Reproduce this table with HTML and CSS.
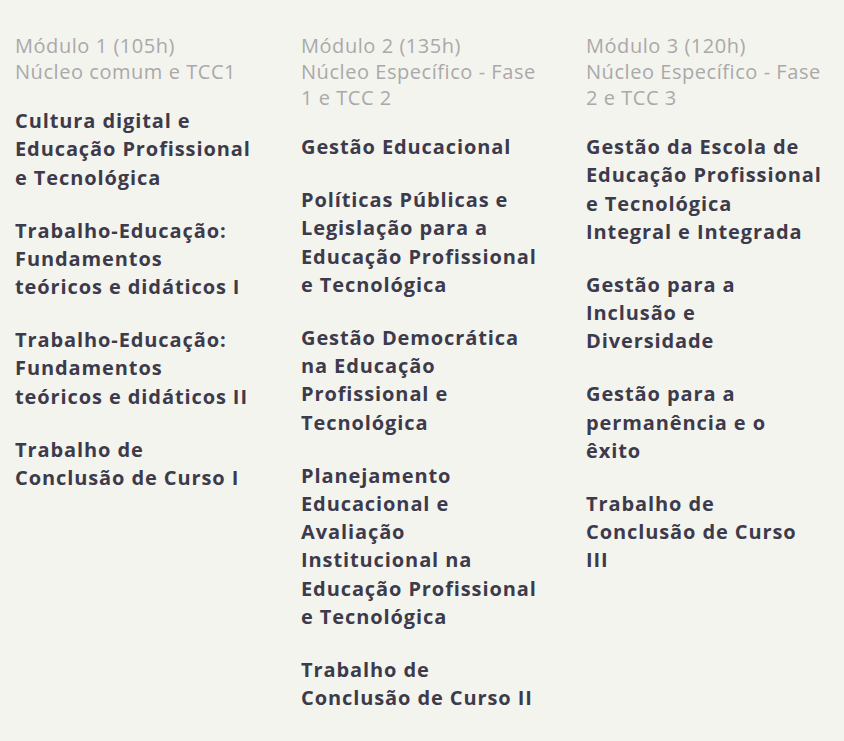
FILE: index.html
```html
<!DOCTYPE html>
<html lang="pt">
<head>
<meta charset="utf-8">
<link rel="stylesheet" href="styles.css">
</head>
<body>
<div class="modules">
  <section class="module">
    <h2 class="module-title">Módulo 1 (105h)<br>Núcleo comum e TCC1</h2>
    <ul class="subjects">
      <li>Cultura digital e Educação Profissional e Tecnológica</li>
      <li>Trabalho-Educação: Fundamentos teóricos e didáticos I</li>
      <li>Trabalho-Educação: Fundamentos teóricos e didáticos II</li>
      <li>Trabalho de Conclusão de Curso I</li>
    </ul>
  </section>
  <section class="module">
    <h2 class="module-title">Módulo 2 (135h)<br>Núcleo Específico - Fase 1 e TCC 2</h2>
    <ul class="subjects">
      <li>Gestão Educacional</li>
      <li>Políticas Públicas e Legislação para a Educação Profissional e Tecnológica</li>
      <li>Gestão Democrática na Educação Profissional e Tecnológica</li>
      <li>Planejamento Educacional e Avaliação Institucional na Educação Profissional e Tecnológica</li>
      <li>Trabalho de Conclusão de Curso II</li>
    </ul>
  </section>
  <section class="module">
    <h2 class="module-title">Módulo 3 (120h)<br>Núcleo Específico - Fase 2 e TCC 3</h2>
    <ul class="subjects">
      <li>Gestão da Escola de Educação Profissional e Tecnológica Integral e Integrada</li>
      <li>Gestão para a Inclusão e Diversidade</li>
      <li>Gestão para a permanência e o êxito</li>
      <li>Trabalho de Conclusão de Curso III</li>
    </ul>
  </section>
</div>
</body>
</html>
```
FILE: styles.css
```css
html, body {
  margin: 0;
  padding: 0;
  background: #f4f4ef;
}
body {
  font-family: "Open Sans", "Liberation Sans", sans-serif;
}
.modules {
  display: grid;
  grid-template-columns: 286px 285px 258px;
  padding: 33px 0 0 15px;
}
.module {
  width: 237px;
}
.module-title {
  margin: 0 0 22px 0;
  font-size: 20px;
  line-height: 26px;
  font-weight: 400;
  letter-spacing: 0.55px;
  color: #a9a9a9;
}
.subjects {
  list-style: none;
  margin: 0;
  padding: 0;
}
.subjects li {
  font-size: 20px;
  line-height: 28.25px;
  font-weight: 700;
  letter-spacing: 0.9px;
  color: #3d3b4b;
  margin-bottom: 24.75px;
}
```
